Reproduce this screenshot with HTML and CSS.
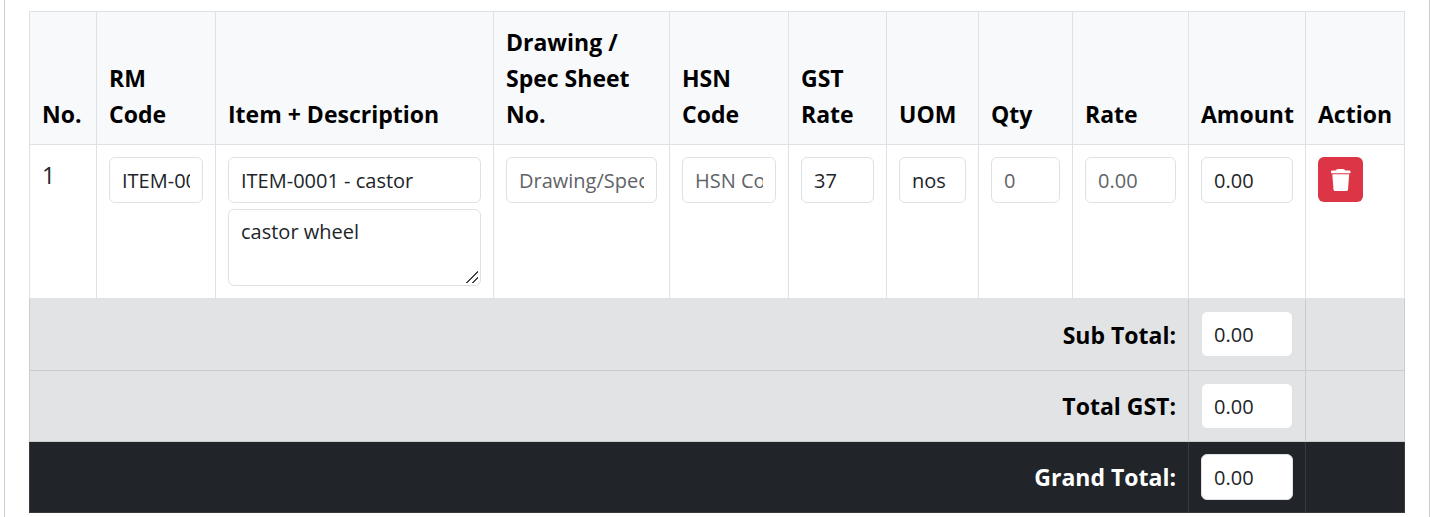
FILE: index.html
```
<!DOCTYPE html>
<html lang="en">
<head>
<meta charset="utf-8">
<title>Items</title>
<link rel="stylesheet" href="styles.css">
</head>
<body>
<main class="card">
<table class="items">
<colgroup>
<col class="c-no"><col class="c-code"><col class="c-item"><col class="c-drawing"><col class="c-code"><col class="c-gst"><col class="c-uom"><col class="c-qty"><col class="c-rate"><col class="c-amount"><col class="c-action">
</colgroup>
<thead>
<tr>
<th scope="col">No.</th>
<th scope="col">RM Code</th>
<th scope="col">Item + Description</th>
<th scope="col">Drawing / Spec Sheet No.</th>
<th scope="col">HSN Code</th>
<th scope="col">GST Rate</th>
<th scope="col">UOM</th>
<th scope="col">Qty</th>
<th scope="col">Rate</th>
<th scope="col">Amount</th>
<th scope="col">Action</th>
</tr>
</thead>
<tbody>
<tr>
<td>1</td>
<td><input class="field" type="text" aria-label="RM Code" value="ITEM-0001"></td>
<td><div class="stack"><input class="field" type="text" aria-label="Item" value="ITEM-0001 - castor"><textarea class="field area" aria-label="Description">castor wheel</textarea></div></td>
<td><input class="field" type="text" aria-label="Drawing / Spec Sheet No." placeholder="Drawing/Spec Sheet No."></td>
<td><input class="field" type="text" aria-label="HSN Code" placeholder="HSN Code"></td>
<td><input class="field number" type="number" step="0.01" aria-label="GST Rate" value="37.00"></td>
<td><input class="field" type="text" aria-label="UOM" value="nos"></td>
<td><input class="field" type="number" aria-label="Qty" placeholder="0"></td>
<td><input class="field" type="number" aria-label="Rate" placeholder="0.00"></td>
<td><input class="field" type="text" aria-label="Amount" value="0.00" readonly></td>
<td><button class="remove" type="button" aria-label="Delete item"><svg class="icon" viewBox="0 0 20 22" aria-hidden="true"><path d="M4.500 1.500Q5.500 0 7 0H12Q13.500 0 14.500 1.500H18.500Q19.500 1.500 19.500 2.500V4.300H0V2.500Q0 1.500 1 1.500Z"/><path d="M1.300 5.300H18.200L17 20.500Q16.800 22 15.300 22H4.200Q2.700 22 2.500 20.500Z"/></svg></button></td>
</tr>
</tbody>
<tfoot>
<tr class="total sub">
<th scope="row" colspan="9"><label for="sub">Sub Total:</label></th>
<td><input class="field" id="sub" type="text" value="0.00" readonly></td>
<td></td>
</tr>
<tr class="total">
<th scope="row" colspan="9"><label for="gst">Total GST:</label></th>
<td><input class="field" id="gst" type="text" value="0.00" readonly></td>
<td></td>
</tr>
<tr class="total grand">
<th scope="row" colspan="9"><label for="grand">Grand Total:</label></th>
<td><input class="field" id="grand" type="text" value="0.00" readonly></td>
<td></td>
</tr>
</tfoot>
</table>
</main>
</body>
</html>
```
FILE: styles.css
```
* { box-sizing: border-box; }
body {
  margin: 0 8px 0 4px;
  background: #fff;
  color: #212529;
  font: 23px/36px "Open Sans", "Noto Sans", sans-serif;
}
.card {
  min-height: 100vh;
  padding: 11px 24px 0;
  border: solid #ccc;
  border-width: 0 1px;
}
.items {
  width: 100%;
  table-layout: fixed;
  border-collapse: collapse;
}
.items th, .items td {
  padding: 12px;
  border: 1px solid #dee2e6;
  text-align: left;
  vertical-align: top;
}
.items th { color: #000; font-weight: 700; }
.items thead th { background: #f8f9fb; vertical-align: bottom; }
.c-no { width: 67px; }
.c-code { width: 119px; }
.c-item { width: 278px; }
.c-drawing { width: 176px; }
.c-gst { width: 98px; }
.c-uom { width: 92px; }
.c-qty { width: 94px; }
.c-rate { width: 116px; }
.c-amount { width: 117px; }
.c-action { width: 99px; }
.stack { display: flex; flex-direction: column; gap: 6px; }
.field {
  display: block;
  width: 100%;
  height: 46px;
  padding: 6px 12px;
  border: 1px solid #dee2e6;
  border-radius: 6px;
  background: #fff;
  color: #212529;
  font: 20px/32px "Open Sans", "Noto Sans", sans-serif;
}
.number { padding-right: 20px; }
.field::placeholder { color: #5f6468; opacity: 1; }
.area { height: 77px; resize: vertical; }
.area::-webkit-resizer {
  background: linear-gradient(135deg, transparent 48%, #444 48% 55%, transparent 55% 74%, #444 74% 81%, transparent 81%) 1px 1px / 12px 12px no-repeat;
}
.remove {
  display: flex;
  align-items: center;
  justify-content: center;
  width: 45px;
  height: 45px;
  padding: 0;
  border: 0;
  border-radius: 6px;
  background: #dc3545;
}
.icon { width: 20px; height: 22px; fill: #fff; }
.items .total { height: 71px; }
.items .sub { height: 72px; }
.items .total th, .items .total td {
  border-color: #cbccce;
  background: #e2e3e5;
}
.items .total th { text-align: right; vertical-align: middle; }
.items .grand th, .items .grand td {
  border-color: #373b3e;
  background: #212529;
  color: #fff;
}
.items .grand th { color: #fff; }
```
